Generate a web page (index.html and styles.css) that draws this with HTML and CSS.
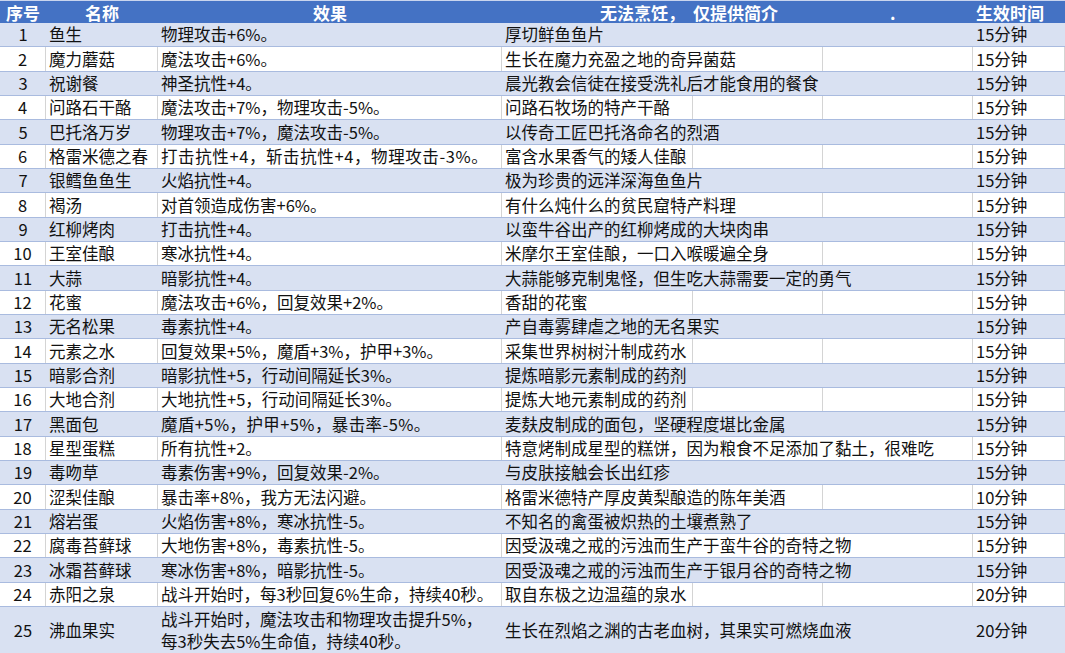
FILE: index.html
```html
<!DOCTYPE html>
<html lang="zh-CN">
<head>
<meta charset="utf-8">
<title>食物效果表</title>
<link rel="stylesheet" href="styles.css">
</head>
<body>
<div class="sheet">
  <div class="row head">
    <div class="c num">序号</div>
    <div class="c name hc">名称</div>
    <div class="c eff hc">效果</div>
    <div class="c desc s3 hd">无法烹饪，<span class="gap">仅提供简介</span><span class="dot">.</span></div>
    <div class="c dur">生效时间</div>
  </div>

  <div class="row band"><div class="c num">1</div><div class="c name">鱼生</div><div class="c eff">物理攻击+6%。</div><div class="c desc s3">厚切鲜鱼鱼片</div><div class="c dur">15分钟</div></div>
  <div class="row"><div class="c num">2</div><div class="c name">魔力蘑菇</div><div class="c eff">魔法攻击+6%。</div><div class="c desc s2">生长在魔力充盈之地的奇异菌菇</div><div class="c"></div><div class="c dur">15分钟</div></div>
  <div class="row band"><div class="c num">3</div><div class="c name">祝谢餐</div><div class="c eff">神圣抗性+4。</div><div class="c desc s3">晨光教会信徒在接受洗礼后才能食用的餐食</div><div class="c dur">15分钟</div></div>
  <div class="row"><div class="c num">4</div><div class="c name">问路石干酪</div><div class="c eff">魔法攻击+7%，物理攻击-5%。</div><div class="c desc">问路石牧场的特产干酪</div><div class="c"></div><div class="c"></div><div class="c dur">15分钟</div></div>
  <div class="row band"><div class="c num">5</div><div class="c name">巴托洛万岁</div><div class="c eff">物理攻击+7%，魔法攻击-5%。</div><div class="c desc s3">以传奇工匠巴托洛命名的烈酒</div><div class="c dur">15分钟</div></div>
  <div class="row"><div class="c num">6</div><div class="c name">格雷米德之春</div><div class="c eff wide">打击抗性+4，斩击抗性+4，物理攻击-3%。</div><div class="c desc">富含水果香气的矮人佳酿</div><div class="c"></div><div class="c"></div><div class="c dur">15分钟</div></div>
  <div class="row band"><div class="c num">7</div><div class="c name">银鳕鱼鱼生</div><div class="c eff">火焰抗性+4。</div><div class="c desc s3">极为珍贵的远洋深海鱼鱼片</div><div class="c dur">15分钟</div></div>
  <div class="row"><div class="c num">8</div><div class="c name">褐汤</div><div class="c eff">对首领造成伤害+6%。</div><div class="c desc s2">有什么炖什么的贫民窟特产料理</div><div class="c"></div><div class="c dur">15分钟</div></div>
  <div class="row band"><div class="c num">9</div><div class="c name">红柳烤肉</div><div class="c eff">打击抗性+4。</div><div class="c desc s3">以蛮牛谷出产的红柳烤成的大块肉串</div><div class="c dur">15分钟</div></div>
  <div class="row"><div class="c num">10</div><div class="c name">王室佳酿</div><div class="c eff">寒冰抗性+4。</div><div class="c desc s2">米摩尔王室佳酿，一口入喉暖遍全身</div><div class="c"></div><div class="c dur">15分钟</div></div>
  <div class="row band"><div class="c num">11</div><div class="c name">大蒜</div><div class="c eff">暗影抗性+4。</div><div class="c desc s3">大蒜能够克制鬼怪，但生吃大蒜需要一定的勇气</div><div class="c dur">15分钟</div></div>
  <div class="row"><div class="c num">12</div><div class="c name">花蜜</div><div class="c eff">魔法攻击+6%，回复效果+2%。</div><div class="c desc">香甜的花蜜</div><div class="c"></div><div class="c"></div><div class="c dur">15分钟</div></div>
  <div class="row band"><div class="c num">13</div><div class="c name">无名松果</div><div class="c eff">毒素抗性+4。</div><div class="c desc s3">产自毒雾肆虐之地的无名果实</div><div class="c dur">15分钟</div></div>
  <div class="row"><div class="c num">14</div><div class="c name">元素之水</div><div class="c eff">回复效果+5%，魔盾+3%，护甲+3%。</div><div class="c desc">采集世界树树汁制成药水</div><div class="c"></div><div class="c"></div><div class="c dur">15分钟</div></div>
  <div class="row band"><div class="c num">15</div><div class="c name">暗影合剂</div><div class="c eff">暗影抗性+5，行动间隔延长3%。</div><div class="c desc s3">提炼暗影元素制成的药剂</div><div class="c dur">15分钟</div></div>
  <div class="row"><div class="c num">16</div><div class="c name">大地合剂</div><div class="c eff">大地抗性+5，行动间隔延长3%。</div><div class="c desc">提炼大地元素制成的药剂</div><div class="c"></div><div class="c"></div><div class="c dur">15分钟</div></div>
  <div class="row band"><div class="c num">17</div><div class="c name">黑面包</div><div class="c eff mid">魔盾+5%，护甲+5%，暴击率-5%。</div><div class="c desc s3">麦麸皮制成的面包，坚硬程度堪比金属</div><div class="c dur">15分钟</div></div>
  <div class="row"><div class="c num">18</div><div class="c name">星型蛋糕</div><div class="c eff">所有抗性+2。</div><div class="c desc s3">特意烤制成星型的糕饼，因为粮食不足添加了黏土，很难吃</div><div class="c dur">15分钟</div></div>
  <div class="row band"><div class="c num">19</div><div class="c name">毒吻草</div><div class="c eff">毒素伤害+9%，回复效果-2%。</div><div class="c desc s3">与皮肤接触会长出红疹</div><div class="c dur">15分钟</div></div>
  <div class="row"><div class="c num">20</div><div class="c name">涩梨佳酿</div><div class="c eff">暴击率+8%，我方无法闪避。</div><div class="c desc s2">格雷米德特产厚皮黄梨酿造的陈年美酒</div><div class="c"></div><div class="c dur">10分钟</div></div>
  <div class="row band"><div class="c num">21</div><div class="c name">熔岩蛋</div><div class="c eff">火焰伤害+8%，寒冰抗性-5。</div><div class="c desc s3">不知名的禽蛋被炽热的土壤煮熟了</div><div class="c dur">15分钟</div></div>
  <div class="row"><div class="c num">22</div><div class="c name">腐毒苔藓球</div><div class="c eff">大地伤害+8%，毒素抗性-5。</div><div class="c desc s3">因受汲魂之戒的污浊而生产于蛮牛谷的奇特之物</div><div class="c dur">15分钟</div></div>
  <div class="row band"><div class="c num">23</div><div class="c name">冰霜苔藓球</div><div class="c eff">寒冰伤害+8%，暗影抗性-5。</div><div class="c desc s3">因受汲魂之戒的污浊而生产于银月谷的奇特之物</div><div class="c dur">15分钟</div></div>
  <div class="row"><div class="c num">24</div><div class="c name">赤阳之泉</div><div class="c eff">战斗开始时，每3秒回复6%生命，持续40秒。</div><div class="c desc">取自东极之边温蕴的泉水</div><div class="c"></div><div class="c"></div><div class="c dur">20分钟</div></div>
  <div class="row band tall"><div class="c num">25</div><div class="c name">沸血果实</div><div class="c eff two"><span class="ln">战斗开始时，魔法攻击和物理攻击提升5%，</span><span class="ln">每3秒失去5%生命值，持续40秒。</span></div><div class="c desc s3">生长在烈焰之渊的古老血树，其果实可燃烧血液</div><div class="c dur">20分钟</div></div>
</div>
</body>
</html>
```

FILE: styles.css
```css
html, body {
  margin: 0;
  padding: 0;
  background: #ffffff;
}

body {
  font-family: "Noto Sans CJK SC", "Noto Sans", sans-serif;
  font-size: 16.5px;
  color: #111111;
  overflow: hidden;
}

.sheet {
  width: 1065px;
}

.row {
  display: grid;
  grid-template-columns: 46px 112px 344px 191px 130px 150px 92px;
  height: 24.33px;
  box-sizing: border-box;
  border-bottom: 1px solid #a9bbdf;
  background: #ffffff;
}

.row.band {
  background: #d9e1f2;
}

.row.tall {
  height: 48px;
}

.c {
  display: flex;
  align-items: center;
  padding: 0 3px;
  white-space: nowrap;
  box-sizing: border-box;
  min-width: 0;
  line-height: 1;
}

.row:not(.band):not(.head) .c {
  border-right: 1px solid #d4d4d4;
}

.num {
  justify-content: center;
  padding: 0;
}

.s2 { grid-column: span 2; }
.s3 { grid-column: span 3; }

.wide {
  letter-spacing: 0.6px;
}

.mid {
  letter-spacing: 0.4px;
}

.two {
  flex-direction: column;
  align-items: flex-start;
  justify-content: center;
  gap: 4px;
}

.ln {
  display: block;
  line-height: 18px;
}

.head {
  height: 23px;
  background: #4472c4;
  border-top: 1px solid #c9d5ee;
  border-bottom: none;
  color: #ffffff;
  font-weight: bold;
  font-size: 17px;
}

.head .hc {
  justify-content: center;
}

.head .hd {
  padding-left: 98px;
}

.gap {
  margin-left: 8px;
}

.dot {
  margin-left: 112px;
}
```
